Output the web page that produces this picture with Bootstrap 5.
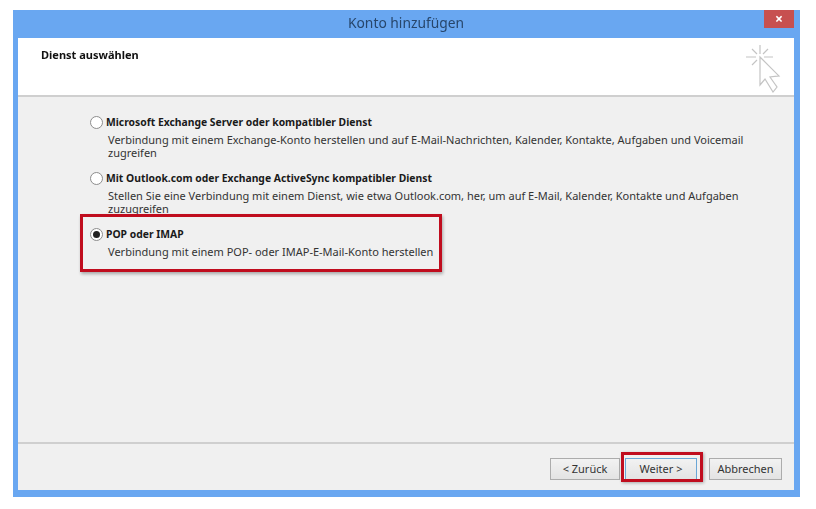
<!DOCTYPE html>
<html lang="de">
<head>
<meta charset="utf-8">
<title>Konto hinzufügen</title>
<link href="https://cdn.jsdelivr.net/npm/bootstrap@5.3.0/dist/css/bootstrap.min.css" rel="stylesheet">
<style>
html,body{height:100%;margin:0;background:#fff;overflow:hidden}
body{font-family:"Noto Sans","Open Sans",sans-serif;font-size:11px;color:#333}
.stage{padding:10px 16px 12px 13px;height:509px}
.dlg{width:787px;height:487px;background:#69a7f1;padding:0 6px 7px 5px;filter:blur(.4px)}
.dlg-title{height:28px;color:#27466b;font-size:13.8px;line-height:25px;position:relative}
.dlg-close{position:absolute;top:0;right:0;width:30px;height:18px;background:#c75050;color:#fff;font-size:14px;line-height:17px;font-weight:700}
.dlg-head{height:59px;background:#fff;border-bottom:2px solid #cfcfcf;padding:9px 23px;color:#111;font-weight:700;position:relative}
.cursor-ic{position:absolute;left:728px;top:5px}
.dlg-body{height:347px;background:#f0f0f0;border-bottom:2px solid #cfcfcf;padding:18px 0 0 72px;position:relative}
.opt{display:flex;gap:3px}
.opt+.opt{margin-top:12px}
.opt-dot{width:13px;height:13px;flex:none;border-radius:50%;border:1px solid #8d8d8d;background:#fff;margin-top:1px;display:flex;align-items:center;justify-content:center}
.opt-dot.on::after{content:"";width:7px;height:7px;border-radius:50%;background:#222}
.opt-name{font-weight:700;font-size:10.35px;color:#1a1a1a;line-height:14px}
.opt-txt{margin-top:4px;line-height:13px;color:#333;width:644px;padding-left:2px}
.mark-a{position:absolute;left:62px;top:117px;width:362px;height:58px;border:3px solid #c00d1e;box-shadow:1px 2px 3px rgba(0,0,0,.3)}
.dlg-foot{height:46px;background:#f0f0f0;padding:3px 12px 0 0;position:relative}
.dlg-btn{height:22px;background:linear-gradient(#f2f2f2,#e3e3e3);border:1px solid #acacac;color:#333;font-size:11px;line-height:19px;text-align:center;padding:0}
.btn-back{width:70px;margin-right:5px}
.btn-next{width:72px;margin-right:12px;border-color:#6aa6d6}
.btn-stop{width:73px}
.mark-b{position:absolute;left:603px;top:8px;width:82px;height:30px;border:3px solid #c00d1e;box-shadow:1px 1px 3px rgba(0,0,0,.3)}
</style>
</head>
<body>
<div class="stage">
  <div class="dlg">
    <div class="dlg-title text-center">Konto hinzufügen
      <div class="dlg-close">×</div>
    </div>
    <div class="dlg-head">Dienst auswählen
      <svg class="cursor-ic" width="36" height="50" viewBox="0 0 36 50" fill="none" stroke="#c4c4c4" stroke-width="1.2">
        <path d="M14 2V11M0 14H10M18 14H27M6 6L11 11M22 6L17 11M6 22L11 17"/>
        <path d="M14 14L33 33L24 34L31 44L27 49L19 36L14 42Z" fill="#fff"/>
      </svg>
    </div>
    <div class="dlg-body">
      <div class="opt">
        <span class="opt-dot"></span>
        <div><div class="opt-name">Microsoft Exchange Server oder kompatibler Dienst</div>
        <div class="opt-txt">Verbindung mit einem Exchange-Konto herstellen und auf E-Mail-Nachrichten, Kalender, Kontakte, Aufgaben und Voicemail zugreifen</div></div>
      </div>
      <div class="opt">
        <span class="opt-dot"></span>
        <div><div class="opt-name">Mit Outlook.com oder Exchange ActiveSync kompatibler Dienst</div>
        <div class="opt-txt">Stellen Sie eine Verbindung mit einem Dienst, wie etwa Outlook.com, her, um auf E-Mail, Kalender, Kontakte und Aufgaben zuzugreifen</div></div>
      </div>
      <div class="opt">
        <span class="opt-dot on"></span>
        <div><div class="opt-name">POP oder IMAP</div>
        <div class="opt-txt">Verbindung mit einem POP- oder IMAP-E-Mail-Konto herstellen</div></div>
      </div>
      <div class="mark-a"></div>
    </div>
    <div class="dlg-foot d-flex justify-content-end align-items-center">
      <button class="dlg-btn btn-back">&lt; Zurück</button>
      <button class="dlg-btn btn-next">Weiter &gt;</button>
      <button class="dlg-btn btn-stop">Abbrechen</button>
      <div class="mark-b"></div>
    </div>
  </div>
</div>
<script src="https://cdn.jsdelivr.net/npm/bootstrap@5.3.0/dist/js/bootstrap.bundle.min.js"></script>
</body>
</html>
